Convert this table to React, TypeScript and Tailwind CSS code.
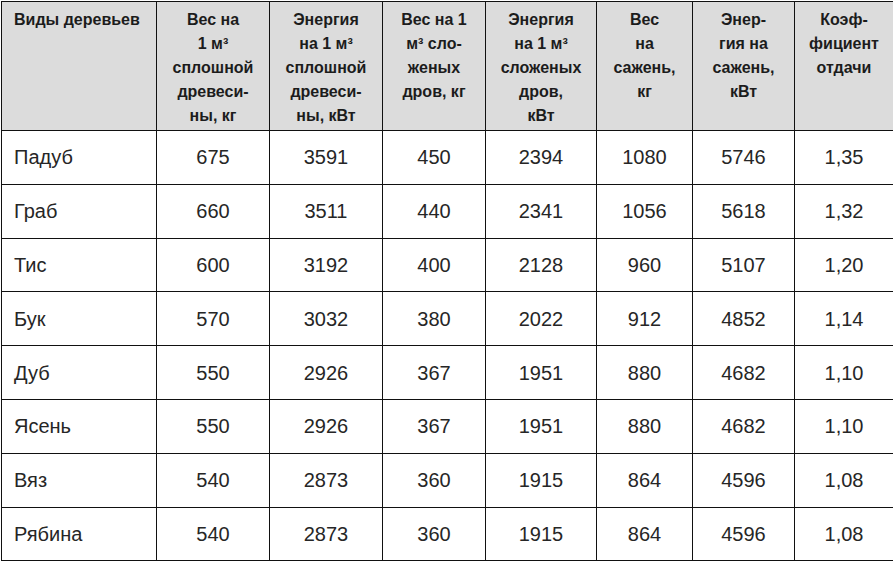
const headers: React.ReactNode[] = [
  <>Виды деревьев</>,
  <>Вес на<br />1 м³<br />сплошной<br />древеси-<br />ны, кг</>,
  <>Энергия<br />на 1 м³<br />сплошной<br />древеси-<br />ны, кВт</>,
  <>Вес на 1<br />м³ сло-<br />женых<br />дров, кг</>,
  <>Энергия<br />на 1 м³<br />сложеных<br />дров,<br />кВт</>,
  <>Вес<br />на<br />сажень,<br />кг</>,
  <>Энер-<br />гия на<br />сажень,<br />кВт</>,
  <>Коэф-<br />фициент<br />отдачи</>,
]

const widths = ["w-[155px]", "w-[113px]", "w-[113px]", "w-[103px]", "w-[111px]", "w-[96px]", "w-[102px]", "w-[99px]"]

const rows: string[][] = [
  ["Падуб", "675", "3591", "450", "2394", "1080", "5746", "1,35"],
  ["Граб", "660", "3511", "440", "2341", "1056", "5618", "1,32"],
  ["Тис", "600", "3192", "400", "2128", "960", "5107", "1,20"],
  ["Бук", "570", "3032", "380", "2022", "912", "4852", "1,14"],
  ["Дуб", "550", "2926", "367", "1951", "880", "4682", "1,10"],
  ["Ясень", "550", "2926", "367", "1951", "880", "4682", "1,10"],
  ["Вяз", "540", "2873", "360", "1915", "864", "4596", "1,08"],
  ["Рябина", "540", "2873", "360", "1915", "864", "4596", "1,08"],
]

export default function App() {
  return (
    <div className="h-[562px] w-[893px] overflow-hidden bg-white p-px font-['Liberation_Sans',Arial,sans-serif] text-[#1c1c1c]">
      <table className="w-[891px] table-fixed border-collapse">
        <thead>
          <tr className="h-[129px] bg-[#dcdcdc]">
            {headers.map((h, i) => (
              <th
                key={i}
                className={`${widths[i]} border-[1.5px] border-[#111] px-0 pt-[6px] align-top text-[16px] font-bold leading-[24px] ${
                  i === 0 ? "pl-3 text-left" : "text-center"
                }`}
              >
                {h}
              </th>
            ))}
          </tr>
        </thead>
        <tbody>
          {rows.map((r) => (
            <tr key={r[0]} className="h-[53.8px]">
              {r.map((c, i) => (
                <td
                  key={i}
                  className={`border-[1.5px] border-[#111] align-middle text-[20px] leading-none text-[#262626] ${
                    i === 0 ? "pl-3 text-left" : "text-center"
                  }`}
                >
                  {c}
                </td>
              ))}
            </tr>
          ))}
        </tbody>
      </table>
    </div>
  )
}
